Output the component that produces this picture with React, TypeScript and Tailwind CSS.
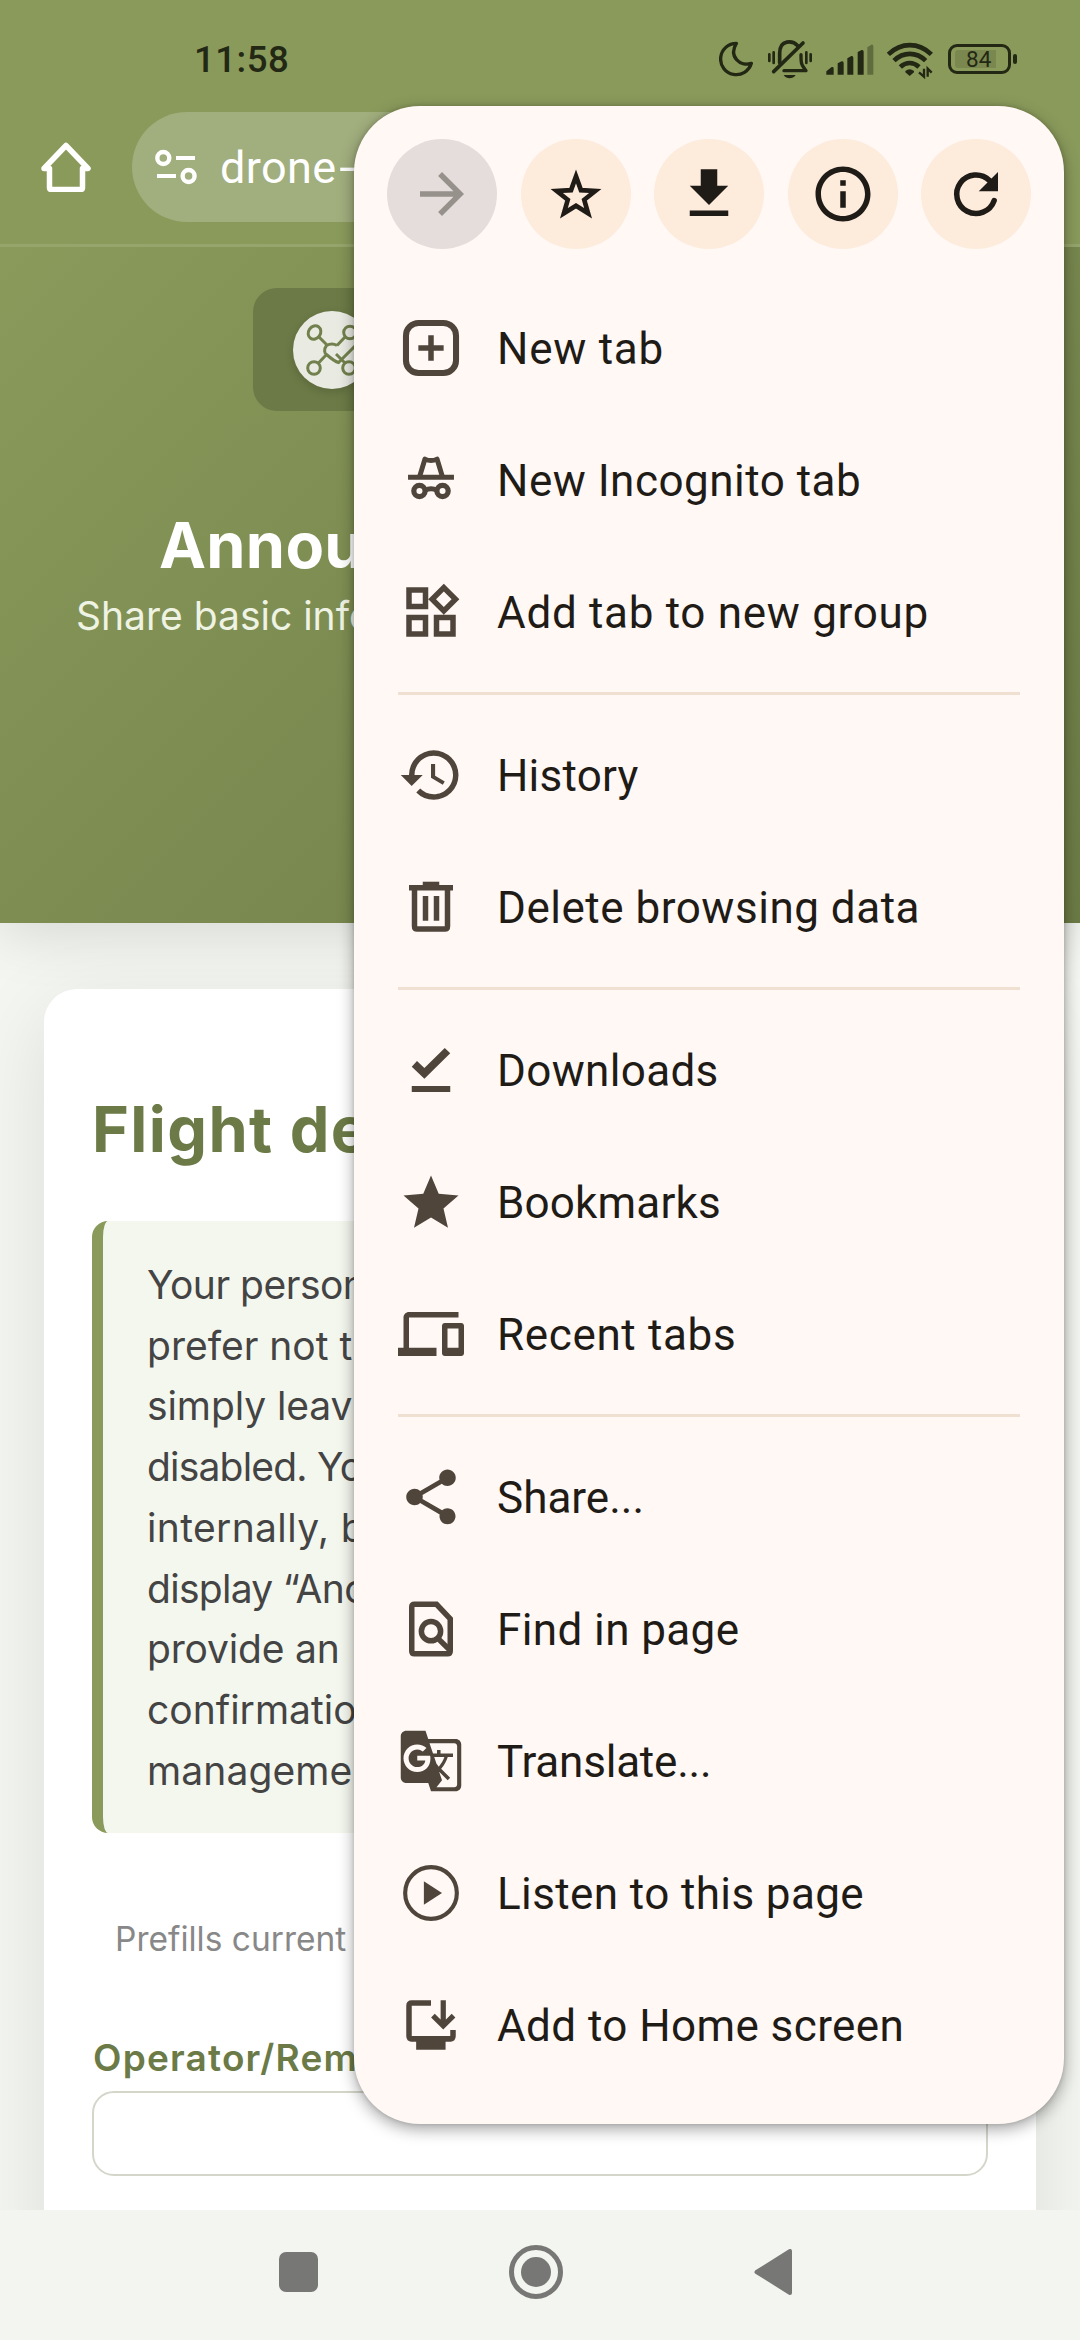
import type { ReactNode } from "react";
import { MdArrowForward, MdDevices, MdGTranslate, MdHistory, MdInfoOutline, MdOutlineWidgets, MdShare, MdStar } from "react-icons/md";

const ICON = "block h-[66px] w-[66px] shrink-0";

function Svg({ children, className = ICON }: { children: ReactNode; className?: string }) {
  return (
    <svg viewBox="0 0 24 24" className={className} fill="none" stroke="currentColor" strokeWidth="2">
      {children}
    </svg>
  );
}

const NewTab = () => (
  <Svg>
    <rect x="2.9" y="2.9" width="18.2" height="18.2" rx="4.6" strokeWidth="2.2" />
    <path d="M12 7.4v9.2M7.4 12h9.2" />
  </Svg>
);

const Incognito = () => (
  <Svg>
    <path d="M3.65 11h16.7" strokeWidth="1.8" />
    <path d="M7.9 10.6 9.8 4.4c1.4.7 3 .7 4.4 0l1.9 6.2" strokeWidth="1.8" strokeLinejoin="round" />
    <circle cx="7.8" cy="16" r="2.05" strokeWidth="1.9" />
    <circle cx="16.2" cy="16" r="2.05" strokeWidth="1.9" />
    <path d="M9.8 15.8c1.3-.7 3.1-.7 4.4 0" strokeWidth="1.8" />
  </Svg>
);

const Trash = () => (
  <Svg>
    <path d="M6 5.5V19q0 1 1 1h10q1 0 1-1V5.5" />
    <path d="M4 5h16" />
    <path d="M9 3.5h6" strokeWidth="1.4" />
    <path d="M10 8v9M14 8v9" />
  </Svg>
);

const DownloadDone = () => (
  <Svg>
    <path d="M6.9 8.7 5 10.8l4.6 4.4L19 5.9 17 4l-7.4 7.3z" fill="currentColor" stroke="none" />
    <path d="M5 18.9h14" strokeWidth="2.2" />
  </Svg>
);

const Bookmark = () => (
  <span className="block pt-[2px]">
    <MdStar className="block h-[66px] w-[66px]" />
  </span>
);

const FindInPage = () => (
  <Svg>
    <path d="M6 3h8l5 5.3V20q0 1-1 1H6q-1 0-1-1V4q0-1 1-1z" />
    <circle cx="12" cy="12.8" r="3.5" />
    <path d="m14.6 15.5 4.4 4.3" />
  </Svg>
);

const Listen = () => (
  <Svg>
    <circle cx="12" cy="12" r="9.4" strokeWidth="1.5" />
    <path d="M9.4 7.7v8.6L16 12z" fill="currentColor" stroke="none" />
  </Svg>
);

const AddToHome = () => (
  <Svg>
    <path d="M12 4H5q-1 0-1 1v11q0 1 1 1h14q1 0 1-1v-2.2" />
    <path d="M4.5 16h15v2H17.3v3H6.6v-3H4.5z" fill="currentColor" stroke="none" />
    <path d="M16.45 3v9.6M12.7 8.6l3.75 3.7 3.75-3.7" strokeWidth="1.9" />
  </Svg>
);

const Star = () => (
  <Svg>
    <path d="M12 5.6 13.8 10.600 19 10.900 15 14.1 16.4 19 12 16.3 7.6 19 9 14.1 5 10.900 10.200 10.600z" strokeWidth="1.7" />
  </Svg>
);

const Download = () => (
  <Svg>
    <path d="M19 9h-4V3H9v6H5l7 7zM5 18v2h14v-2z" fill="currentColor" stroke="none" />
  </Svg>
);

const Refresh = () => (
  <Svg>
    <path d="M16.9 7.1A7 7 0 1 0 18.6 14.4" strokeLinecap="round" />
    <path d="M20 4v7h-7z" fill="currentColor" stroke="none" />
  </Svg>
);

type Item = { icon: ReactNode; label: string; track: string };

const groups: Item[][] = [
  [
    { icon: <NewTab />, label: "New tab", track: "tracking-[0.75px]" },
    { icon: <Incognito />, label: "New Incognito tab", track: "tracking-[0.49px]" },
    { icon: <MdOutlineWidgets className={ICON} />, label: "Add tab to new group", track: "tracking-[0.69px]" },
  ],
  [
    { icon: <MdHistory className={ICON} />, label: "History", track: "tracking-[0.22px]" },
    { icon: <Trash />, label: "Delete browsing data", track: "tracking-[0.52px]" },
  ],
  [
    { icon: <DownloadDone />, label: "Downloads", track: "tracking-[0.34px]" },
    { icon: <Bookmark />, label: "Bookmarks", track: "tracking-[0.17px]" },
    { icon: <MdDevices className={ICON} />, label: "Recent tabs", track: "tracking-[0.65px]" },
  ],
  [
    { icon: <MdShare className={ICON} />, label: "Share...", track: "tracking-[0.02px]" },
    { icon: <FindInPage />, label: "Find in page", track: "tracking-[0.4px]" },
    { icon: <MdGTranslate className={ICON} />, label: "Translate...", track: "tracking-[-0.2px]" },
    { icon: <Listen />, label: "Listen to this page", track: "tracking-[0.39px]" },
    { icon: <AddToHome />, label: "Add to Home screen", track: "tracking-[0.42px]" },
  ],
];

function Menu() {
  const round = "flex h-[110px] w-[110px] items-center justify-center rounded-full bg-[#fdebdc] text-[#1f1b16]";
  return (
    <div className="absolute left-[354px] top-[106px] h-[2018px] w-[710px] rounded-[66px] bg-[#fff8f5] shadow-[0_5px_16px_rgba(0,0,0,0.36),0_0_4px_rgba(0,0,0,0.15)] font-['Roboto',sans-serif]">
      <div className="flex justify-between px-[33px] pb-[33px] pt-[33px]">
        <div className="flex h-[110px] w-[110px] items-center justify-center rounded-full bg-[#e5dddb] text-[#97918b]">
          <MdArrowForward className={ICON} />
        </div>
        <div className={round}><Star /></div>
        <div className={round}><Download /></div>
        <div className={round}><MdInfoOutline className={ICON} /></div>
        <div className={round}><Refresh /></div>
      </div>
      {groups.map((items, i) => (
        <div key={i}>
          {i > 0 && <div className="mx-[44px] my-[14px] h-[3px] bg-[#f0e0d2]" />}
          {items.map((it) => (
            <div key={it.label} className="flex h-[132px] items-center gap-[33px] px-[44px] text-[#50453b]">
              {it.icon}
              <span className={`whitespace-nowrap pt-[2px] text-[44px] leading-[60px] text-[#1f1b16] ${it.track}`}>{it.label}</span>
            </div>
          ))}
        </div>
      ))}
    </div>
  );
}

function StatusBar() {
  return (
    <div className="flex h-[112px] items-start text-[#232814]">
      <div className="ml-[194px] mt-[30px] w-[525px] font-['Roboto',sans-serif] text-[36.6px] font-medium leading-[60px] tracking-[0.5px]">11:58</div>
      <svg viewBox="57 60 104 114" className="mt-[40px] h-[38px] w-[34.7px]" fill="none" stroke="currentColor" strokeWidth="10">
        <path d="M109 70A47 47 0 1 0 154 130C120 141 85 110 109 70z" strokeLinejoin="round" />
      </svg>
      <svg viewBox="207 60 132 117" className="ml-[14.3px] mt-[40px] h-[39px] w-[44px]" fill="none" stroke="currentColor" strokeWidth="8" strokeLinecap="round">
        <path d="M211 103v20M224 97v32M322 97v32M335 103v20" strokeWidth="8" />
        <path d="M242 128v-28c0-44 40-38 54-23" strokeWidth="11" />
        <path d="M224 155 312 69" strokeWidth="11" />
        <path d="M306 104c0 26 0 28 15 48h-66" strokeWidth="10" strokeLinejoin="round" />
        <path d="M254 165h36c-8 13-28 13-36 0z" fill="currentColor" stroke="none" />
      </svg>
      <svg viewBox="381 60 144 117" className="ml-[14px] mt-[40px] h-[39px] w-[48px]" fill="currentColor">
        <path d="M382 154l16-13q6-1 6 4v19h-22zM416 130l12-6q6-1 6 5v35h-18zM445 115l12-7q6-1 6 5v51h-18zM476 96l12-6q6-1 6 5v69h-18z" />
        <path d="M505 82l12-8q6-1 6 5v85h-18z" opacity="0.4" />
      </svg>
      <svg viewBox="564 60 138 117" className="ml-[13px] mt-[40px] h-[39px] w-[46px]" fill="none" stroke="currentColor" strokeWidth="14">
        <path d="M568 103c38-37 91-37 129 0M585 122c28-27 67-27 95 0M604 141c17-16 39-16 56 0" />
        <path d="M619 153q13-10 26 0v4l-13 11-13-11z" fill="currentColor" stroke="none" />
        <path d="M675 146v24l-15-13M686 170v-24l12 12" strokeWidth="7" />
      </svg>
      <div className="ml-[15px] mt-[44px] flex items-center">
        <div className="flex h-[30px] w-[63px] items-center rounded-[9px] border-[3px] border-[#232814] pl-[4px]">
          <div className="flex h-[18px] w-[41px] items-center rounded-l-[3px] bg-[#7a884f]">
            <span className="ml-[11px] font-['Roboto',sans-serif] text-[22.500px] leading-none">84</span>
          </div>
        </div>
        <div className="ml-[2px] h-[10px] w-[4px] rounded-[2px] bg-[#232814]" />
      </div>
    </div>
  );
}

function Toolbar() {
  return (
    <div className="flex h-[135px] items-start border-b-[3px] border-[#96a56c] text-white">
      <svg viewBox="0 0 50 50" className="ml-[41px] mt-[30px] h-[50px] w-[50px]" fill="none" stroke="currentColor" strokeWidth="5.5" strokeLinejoin="round">
        <path d="M3 26.5 25 3.5 47 26.5H41.5V45.5q0 2-2 2H10.500q-2 0-2-2V26.5z" />
      </svg>
      <div className="ml-[41px] mr-[132px] flex h-[110px] flex-1 items-center rounded-[55px] bg-[#a1ae7d]">
        <svg viewBox="0 0 42 36" className="ml-[23px] h-[36px] w-[42px]" fill="none" stroke="currentColor" strokeWidth="4.400">
          <circle cx="8.300" cy="9" r="6" />
          <path d="M21 9h19M2 27h19" strokeWidth="4" />
          <circle cx="33.600" cy="27" r="6" />
        </svg>
        <span className="ml-[23px] pt-[2px] font-['Roboto',sans-serif] text-[45px] leading-[60px] tracking-[0.4px]">
          drone<span className="ml-[2px] inline-block origin-left scale-x-[1.5]">-</span>
        </span>
      </div>
    </div>
  );
}

function Hero() {
  return (
    <div className="h-[676px] overflow-hidden">
      <div className="mx-[253px] mt-[41px] flex h-[123px] items-center rounded-[24px] bg-[#6b7a46] pl-[40px]">
        <svg viewBox="0 0 78 78" className="h-[78px] w-[78px] rounded-full bg-[#e9ebe3] shadow-[0_3px_10px_rgba(0,0,0,0.15)]" fill="none" stroke="#71804c" strokeWidth="3">
          <ellipse cx="21.500" cy="21.500" rx="6" ry="7" transform="rotate(35 21.500 21.500)" />
          <circle cx="57" cy="21.500" r="6.300" />
          <circle cx="21" cy="57" r="6.300" />
          <circle cx="56" cy="57" r="6.300" />
          <path d="M26 26l7.500 7.500M25.500 52l8-8.500M52 26l-8 8.500M52 52l-9-9M44 34.500q-5-3-10.500 0c-3 4-2 8 0 9q8 7 12 8L66 31" />
        </svg>
      </div>
      <div className="mt-[95px] pl-[159px] font-['Inter',sans-serif] text-[63px] font-bold leading-[78px] tracking-[0.300px] text-white">Annou</div>
      <div className="pl-[76px] font-['Inter',sans-serif] text-[39px] leading-[64px] text-[#eff3e3]">Share basic info</div>
    </div>
  );
}

const notice: [string, string][] = [
  ["Your person", "tracking-[-0.5px]"],
  ["prefer not t", "tracking-normal"],
  ["simply leav", "tracking-[-0.1px]"],
  ["disabled. Yo", "tracking-[-0.8px]"],
  ["internally, b", "tracking-[0.36px]"],
  ["display “Ano", "tracking-[-0.7px]"],
  ["provide an", "tracking-[-0.19px]"],
  ["confirmatio", "tracking-[0px]"],
  ["manageme", "tracking-[0.1px]"],
];

function Card() {
  return (
    <div className="mx-[44px] mt-[66px] h-[1400px] rounded-[33px] bg-white px-[48px] pt-[101px] font-['Inter',sans-serif] shadow-[0_22px_83px_rgba(0,0,0,0.1)]">
      <div className="text-[63px] font-bold leading-[78px] tracking-[1.370px] text-[#6b7a46]">Flight de</div>
      <div className="mt-[53px] h-[612px] rounded-[16px] border-l-[11px] border-[#8a9a5b] bg-[#f4f7ee] pl-[44px] pt-[34px] text-[39px] leading-[60.700px] text-[#444]">
        {notice.map(([t, track]) => (
          <div key={t} className={`whitespace-nowrap ${track}`}>{t}</div>
        ))}
      </div>
      <div className="mt-[79px] pl-[23px] text-[33.500px] leading-[54px] text-[#888]">Prefills current</div>
      <div className="mt-[67px] pl-px text-[37px] font-semibold leading-[50px] tracking-[1.200px] text-[#6b7a46]">Operator/Rem</div>
      <div className="mt-[8px] h-[85px] rounded-[22px] border-2 border-[#d4d6ca]" />
    </div>
  );
}

function NavBar() {
  return (
    <div className="flex h-[130px] items-start bg-[#f3f5f0] text-[#777875]">
      <div className="ml-[279px] mt-[42px] h-[40px] w-[39px] rounded-[7px] bg-current" />
      <div className="ml-[191px] mt-[35px] flex h-[54px] w-[54px] items-center justify-center rounded-full border-[5px] border-current">
        <div className="h-[30px] w-[30px] rounded-full bg-current" />
      </div>
      <svg viewBox="0 0 38 46" className="ml-[191px] mt-[39px] h-[46px] w-[38px]" fill="currentColor" stroke="currentColor" strokeWidth="4" strokeLinejoin="round">
        <path d="M36 2v42L2.500 23z" />
      </svg>
    </div>
  );
}

export default function App() {
  return (
    <div className="relative flex h-[2340px] w-[1080px] flex-col overflow-hidden bg-[#f4f6f1]">
      <div className="h-[247px] shrink-0 bg-[#8a9a5b]">
        <StatusBar />
        <Toolbar />
      </div>
      <div className="h-[1963px] shrink-0 overflow-hidden">
        <div className="h-[676px] bg-[linear-gradient(135deg,#8a9a5b_0%,#6b7a45_100%)] shadow-[0_11px_55px_rgba(0,0,0,0.12)]">
          <Hero />
        </div>
        <Card />
      </div>
      <NavBar />
      <Menu />
    </div>
  );
}
